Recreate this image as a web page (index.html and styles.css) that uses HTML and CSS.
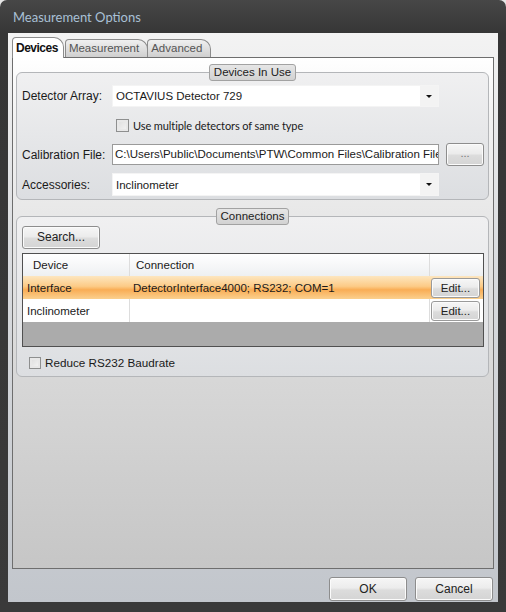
FILE: index.html
```html
<!DOCTYPE html>
<html>
<head>
<meta charset="utf-8">
<link rel="stylesheet" href="styles.css">
</head>
<body>
<div class="window">
  <div class="titlebar">Measurement Options</div>
  <div class="client">
    <div class="tabs">
      <div class="tab active">Devices</div>
      <div class="tab">Measurement</div>
      <div class="tab">Advanced</div>
    </div>
    <div class="panel">
      <div class="group group-devices">
        <div class="legend">Devices In Use</div>
        <div class="row row-detector">
          <span class="label">Detector Array:</span>
          <div class="combo"><span class="combo-text">OCTAVIUS Detector 729</span><span class="combo-arrow"></span></div>
        </div>
        <div class="row row-check">
          <span class="checkbox"></span><span class="check-label">Use multiple detectors of same type</span>
        </div>
        <div class="row row-calib">
          <span class="label">Calibration File:</span>
          <div class="textbox"><span class="textbox-text">C:\Users\Public\Documents\PTW\Common Files\Calibration Files</span></div>
          <div class="button btn-browse">...</div>
        </div>
        <div class="row row-acc">
          <span class="label">Accessories:</span>
          <div class="combo"><span class="combo-text">Inclinometer</span><span class="combo-arrow"></span></div>
        </div>
      </div>
      <div class="group group-conn">
        <div class="legend">Connections</div>
        <div class="button btn-search">Search...</div>
        <div class="grid">
          <div class="grid-row grid-head">
            <div class="cell c1">Device</div>
            <div class="cell c2">Connection</div>
            <div class="cell c3"></div>
          </div>
          <div class="grid-row selected">
            <div class="cell c1">Interface</div>
            <div class="cell c2">DetectorInterface4000; RS232; COM=1</div>
            <div class="cell c3"><div class="button btn-edit">Edit...</div></div>
          </div>
          <div class="grid-row">
            <div class="cell c1">Inclinometer</div>
            <div class="cell c2"></div>
            <div class="cell c3"><div class="button btn-edit">Edit...</div></div>
          </div>
          <div class="grid-empty"></div>
        </div>
        <div class="row row-baud">
          <span class="checkbox"></span><span class="check-label">Reduce RS232 Baudrate</span>
        </div>
      </div>
    </div>
    <div class="footer">
      <div class="button btn-dlg">OK</div>
      <div class="button btn-dlg">Cancel</div>
    </div>
  </div>
</div>
</body>
</html>
```
FILE: styles.css
```css
* { box-sizing: border-box; }
html, body { margin: 0; padding: 0; }
body {
  background: #e6e6e6;
  font-family: "Liberation Sans", Arial, sans-serif;
  font-size: 12px;
  color: #1a1a1a;
}
.window {
  width: 506px;
  height: 612px;
  background: linear-gradient(to bottom, #474747 0px, #363636 33px, #3a3a3a 100%);
  border-radius: 7px 7px 0 0;
  padding: 0 8px 10px 8px;
  display: flex;
  flex-direction: column;
}
.titlebar {
  height: 33px;
  line-height: 34px;
  padding-left: 5px;
  color: #a9c0d6;
  font-family: Lato, "Noto Sans", sans-serif;
  font-size: 13px;
}
.client {
  height: 569px;
  background: linear-gradient(to bottom, #f3f3f3 0%, #dadcdf 40%, #c2c6cc 100%);
  padding: 4px 4px 0 4px;
  display: flex;
  flex-direction: column;
}
.tabs {
  height: 20px;
  display: flex;
  align-items: flex-end;
  position: relative;
  z-index: 1;
}
.tab {
  height: 18px;
  padding: 0 8px 0 3px;
  border: 1px solid #8c8c8c;
  border-bottom: none;
  border-radius: 4px 10px 0 0;
  background: linear-gradient(to bottom, #f0f0f0, #cfcfcf);
  color: #555;
  font-size: 11.5px;
  line-height: 17px;
  margin-right: -1px;
}
.tab.active {
  height: 21px;
  margin-bottom: -1px;
  margin-right: 1px;
  background: #ffffff;
  color: #111;
  font-weight: bold;
  font-size: 12px;
  letter-spacing: -0.5px;
  padding: 2px 5px 0 3px;
}
.panel {
  height: 512px;
  border: 1px solid #6e6e6e;
  background: linear-gradient(to bottom, #ffffff 0px, #f2f2f2 60px, #d9d9d9 300px, #c6c6c6 100%);
  padding: 0 4px 0 3px;
}
.group {
  border: 1px solid #b4b6b9;
  border-radius: 6px;
  background: linear-gradient(to bottom, #f0f0f1, #dcdee1);
  display: flex;
  flex-direction: column;
}
.group-devices {
  margin-top: 14px;
  height: 128px;
  padding: 0 0 0 5px;
}
.group-conn {
  margin-top: 16px;
  height: 161px;
  padding: 0 5px 0 5px;
}
.legend {
  align-self: center;
  height: 17px;
  margin-top: -9px;
  padding: 0 4px;
  border: 1px solid #a2a2a2;
  border-radius: 3px;
  background: linear-gradient(to bottom, #e6e6e6, #d2d2d2);
  line-height: 15px;
  font-size: 11.5px;
  color: #222;
}
.group-devices .legend { margin-left: -5px; }
.row {
  display: flex;
  align-items: center;
}
.label {
  width: 90px;
  flex: none;
}
.row-detector { margin-top: 4px; height: 22px; }
.row-check { margin-top: 12px; height: 13px; padding-left: 94px; }
.row-calib { margin-top: 11px; height: 23px; }
.row-acc { margin-top: 7px; height: 23px; }
.combo {
  width: 327px;
  height: 100%;
  background: #fff;
  border: 1px solid #f4f4f4;
  display: flex;
  align-items: center;
  justify-content: space-between;
  padding-left: 3px;
}
.combo-text { font-size: 11.5px; }
.combo-arrow {
  width: 18px;
  height: 100%;
  background: #f3f3f3;
  position: relative;
}
.combo-arrow::after {
  content: "";
  position: absolute;
  left: 6px;
  top: 9px;
  border-left: 3px solid transparent;
  border-right: 3px solid transparent;
  border-top: 3px solid #111;
}
.checkbox {
  width: 13px;
  height: 13px;
  flex: none;
  border: 1px solid #8e8f8f;
  background: linear-gradient(135deg, #dcdcdc, #f6f6f6);
  box-shadow: inset 0 0 0 2px #e8e8e8;
}
.check-label {
  margin-left: 4px;
  font-family: Lato, "Noto Sans", sans-serif;
  font-size: 11px;
  letter-spacing: -0.1px;
}
.textbox {
  width: 327px;
  height: 21px;
  border: 1px solid #9a9a9a;
  background: #fff;
  padding-left: 2px;
  line-height: 19px;
  overflow: hidden;
  white-space: nowrap;
}
.textbox-text { font-size: 11.5px; }
.button {
  border: 1px solid #8d8d8d;
  border-radius: 3px;
  background: linear-gradient(to bottom, #f6f6f6 0%, #ececec 45%, #dcdcdc 55%, #d4d4d4 100%);
  box-shadow: inset 0 0 0 1px #fbfbfb;
  text-align: center;
  color: #222;
}
.btn-browse {
  width: 38px;
  height: 23px;
  margin-left: 7px;
  line-height: 19px;
  color: #777;
  font-size: 11px;
}
.btn-search {
  width: 78px;
  height: 23px;
  margin-top: 1px;
  line-height: 21px;
}
.grid {
  margin-top: 4px;
  width: 462px;
  height: 94px;
  border: 1px solid #505050;
  background: #ababab;
  display: flex;
  flex-direction: column;
}
.grid-row {
  display: flex;
  height: 23px;
  background: #fff;
  flex: none;
  font-size: 11.5px;
}
.grid-head {
  height: 22px;
  background: linear-gradient(to bottom, #ffffff, #eef0f2);
}
.cell {
  display: flex;
  align-items: center;
  white-space: nowrap;
}
.c1 { width: 107px; padding-left: 4px; border-right: 1px solid #dddddd; }
.c2 { width: 300px; padding-left: 3px; border-right: 1px solid #dddddd; }
.c3 { flex: 1; padding-left: 1px; }
.grid-head .c1 { padding-left: 10px; }
.grid-head .c2 { padding-left: 6px; }
.selected {
  background: linear-gradient(to bottom, #fde6bf 0%, #fccb86 45%, #f9ad55 60%, #fbd08e 100%);
}
.selected .c1, .selected .c2 { border-right-color: transparent; }
.btn-edit {
  width: 49px;
  height: 20px;
  line-height: 18px;
  font-size: 11.5px;
  border-color: #9a9a9a;
}
.row-baud { margin-top: 9px; height: 13px; padding-left: 7px; }
.row-baud .checkbox { width: 12px; height: 12px; }
.row-baud .check-label { font-family: "Liberation Sans", Arial, sans-serif; font-size: 11.7px; letter-spacing: 0; margin-left: 4px; }
.footer {
  margin-top: 8px;
  display: flex;
  justify-content: flex-end;
  gap: 8px;
  padding-right: 1px;
}
.btn-dlg {
  width: 78px;
  height: 24px;
  line-height: 22px;
  font-size: 12px;
}
```
